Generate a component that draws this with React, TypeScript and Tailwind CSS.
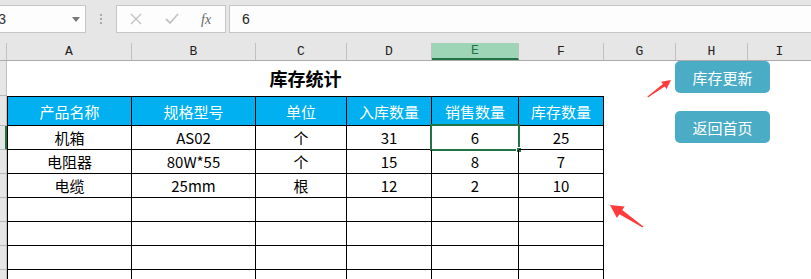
import React from "react";

const cols = [
  { key: "A", w: "w-[125px]" },
  { key: "B", w: "w-[124px]" },
  { key: "C", w: "w-[91px]" },
  { key: "D", w: "w-[85px]" },
  { key: "E", w: "w-[87px]" },
  { key: "F", w: "w-[85px]" },
];

const heads = ["产品名称", "规格型号", "单位", "入库数量", "销售数量", "库存数量"];

const rows = [
  ["机箱", "AS02", "个", "31", "6", "25"],
  ["电阻器", "80W*55", "个", "15", "8", "7"],
  ["电缆", "25mm", "根", "12", "2", "10"],
  ["", "", "", "", "", ""],
  ["", "", "", "", "", ""],
  ["", "", "", "", "", ""],
  ["", "", "", "", "", ""],
];

const cjk = "font-['Noto_Sans_CJK_SC',sans-serif]";

function FormulaBar() {
  return (
    <div className="h-[43px] bg-[#e6e6e6] pt-[5px]">
      <div className="flex h-[28px]">
        <div className="relative w-[86px] h-full bg-[#fdfdfd] border border-l-0 border-[#c6c6c6] overflow-hidden flex items-center">
          <span className="ml-[-11px] text-[14px] text-[#333] font-['Liberation_Sans',sans-serif]">E3</span>
          <span className="absolute left-[72px] top-[11px] w-0 h-0 border-l-[4px] border-r-[4px] border-t-[5px] border-l-transparent border-r-transparent border-t-[#777]" />
        </div>
        <div className="w-[30px] flex flex-col items-center justify-center gap-[2px]">
          <span className="w-[2px] h-[2px] bg-[#aaa]" />
          <span className="w-[2px] h-[2px] bg-[#aaa]" />
          <span className="w-[2px] h-[2px] bg-[#aaa]" />
        </div>
        <div className="w-[110px] h-full bg-[#fdfdfd] border border-[#c6c6c6] flex items-center">
          <svg width="12" height="12" viewBox="0 0 12 12" className="ml-[13px]">
            <path d="M1 1 L11 11 M11 1 L1 11" stroke="#c4c4c4" strokeWidth="1.4" fill="none" />
          </svg>
          <svg width="14" height="12" viewBox="0 0 14 12" className="ml-[23px]">
            <path d="M1 6 L5 10 L13 1" stroke="#c4c4c4" strokeWidth="1.8" fill="none" />
          </svg>
          <span className="ml-[22px] text-[14px] italic text-[#666] font-['Liberation_Serif',serif]">fx</span>
        </div>
        <div className="ml-[3px] flex-1 h-full bg-[#fdfdfd] border border-r-0 border-[#c6c6c6] flex items-center">
          <span className="ml-[12px] text-[14px] text-[#222] font-['Liberation_Sans',sans-serif]">6</span>
        </div>
      </div>
    </div>
  );
}

function ColumnHeaders() {
  const all = [
    ...cols,
    { key: "G", w: "w-[72px]" },
    { key: "H", w: "w-[72px]" },
    { key: "I", w: "w-[64px]" },
  ];
  return (
    <div className="flex h-[18px] bg-[#e6e6e6] border-b border-[#ababab] font-['Liberation_Mono',monospace] text-[13px] text-[#222]">
      <div className="w-[7px] shrink-0 border-r border-[#c0c0c0]" />
      {all.map((c) => (
        <div
          key={c.key}
          className={`${c.w} shrink-0 flex items-center justify-center border-r border-[#c0c0c0] ${
            c.key === "E" ? "bg-[#9fd5b7] text-[#217346] border-b-2 border-b-[#217346]" : ""
          }`}
        >
          {c.key}
        </div>
      ))}
    </div>
  );
}

function RowHead({ active = false }: { active?: boolean }) {
  return (
    <div
      className={`w-[7px] shrink-0 bg-[#e6e6e6] border-b border-[#b8b8b8] ${
        active ? "border-r-2 border-r-[#217346] bg-[#d2d2d2]" : "border-r border-r-[#c0c0c0]"
      }`}
    />
  );
}

export default function App() {
  return (
    <div className={`relative w-[811px] h-[279px] overflow-hidden bg-white ${cjk}`}>
      <FormulaBar />
      <ColumnHeaders />

      {/* title row */}
      <div className="flex h-[35px]">
        <RowHead />
        <div className="w-[597px] flex items-center justify-center text-[18px] font-bold text-black">库存统计</div>
      </div>

      {/* header row */}
      <div className="flex h-[30px]">
        <RowHead />
        {cols.map((c, i) => (
          <div
            key={c.key}
            className={`${c.w} shrink-0 bg-[#00b0f0] border-y border-r border-black ${i === 0 ? "border-l" : ""} flex items-center justify-center text-white text-[15px] leading-none`}
          >
            {heads[i]}
          </div>
        ))}
      </div>

      {rows.map((r, ri) => (
        <div key={ri} className="flex h-[24px]">
          <RowHead active={ri === 0} />
          {cols.map((c, i) => (
            <div
              key={c.key}
              className={`relative ${c.w} shrink-0 border-b border-r border-black ${i === 0 ? "border-l" : ""} flex items-center justify-center text-black text-[15px] leading-none`}
            >
              {r[i]}
              {ri === 0 && i === 4 && (
                <>
                  <span className="absolute left-[-2px] top-[-2px] right-[-2px] bottom-[-2px] border-2 border-[#217346]" />
                  <span className="absolute right-[-4px] bottom-[-4px] w-[6px] h-[6px] bg-[#217346] border border-white" />
                </>
              )}
            </div>
          ))}
        </div>
      ))}

      <button className="absolute left-[675px] top-[61px] w-[95px] h-[32px] rounded-[5px] bg-[#4bacc6] text-white text-[15px] leading-none">
        库存更新
      </button>
      <button className="absolute left-[675px] top-[111px] w-[95px] h-[32px] rounded-[5px] bg-[#4bacc6] text-white text-[15px] leading-none">
        返回首页
      </button>

      <svg className="absolute inset-0 pointer-events-none" width="811" height="279" viewBox="0 0 811 279">
        <polygon
          points="648,97.5 664.7,86.5 666.5,88.9 671,80 661.1,81.7 662.9,84.1 647.4,96.6"
          fill="#ff3b3b"
        />
        <polygon
          points="643.4,226.4 622.2,210.1 624.7,206.4 610,205 616.9,218 619.4,214.3 642.6,227.6"
          fill="#ff3b3b"
        />
      </svg>
    </div>
  );
}
